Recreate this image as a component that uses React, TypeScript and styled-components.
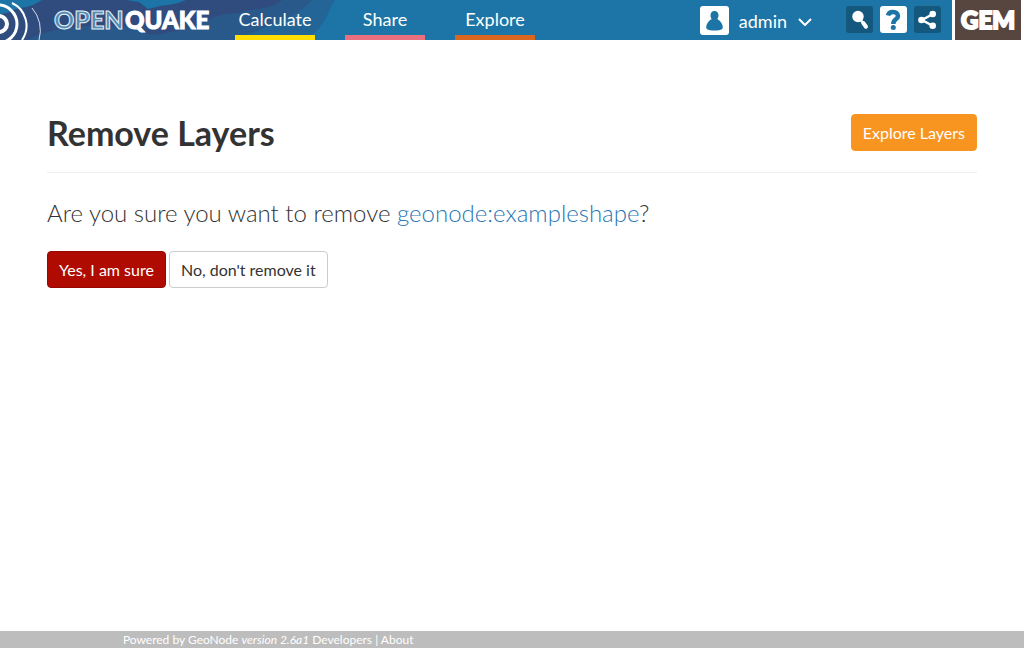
import React from 'react';
import styled, { createGlobalStyle } from 'styled-components';

const GlobalStyle = createGlobalStyle`
  *, *::before, *::after { box-sizing: border-box; }
  body {
    margin: 0;
    background: #fff;
    color: #333;
    font-family: Lato, sans-serif;
    font-size: 16px;
    line-height: 23px;
  }
  a { color: inherit; text-decoration: none; }
  button { font: inherit; cursor: pointer; }
`;

const Page = styled.div`
  min-height: 100vh;
  display: flex;
  flex-direction: column;
`;

const Header = styled.header`
  position: relative;
  display: flex;
  height: 40px;
  background: #1c75a6;
  color: #fff;
`;

const Waves = styled.svg`
  position: absolute;
  top: 0;
  left: 0;
`;

const Brand = styled.a`
  position: relative;
  width: 235px;
  flex: none;
`;

const Nav = styled.nav`
  position: relative;
  display: flex;
  gap: 30px;
`;

const NavLink = styled.a<{ $accent: string }>`
  width: 80px;
  height: 40px;
  border-bottom: 5px solid ${(p) => p.$accent};
  font-size: 18px;
  line-height: 39px;
  text-align: center;
`;

const Account = styled.button`
  display: flex;
  align-items: center;
  gap: 10px;
  margin-left: auto;
  padding: 0;
  border: 0;
  background: none;
  color: #fff;
  && { font-size: 18px; }
`;

const UserName = styled.span`
  padding-top: 3px;
`;

const Tools = styled.div`
  display: flex;
  gap: 7px;
  padding: 6px 11px 0 33px;
`;

const Tool = styled.button<{ $light?: boolean }>`
  display: block;
  width: 27px;
  height: 27px;
  padding: 0;
  border: 0;
  border-radius: 3px;
  background: ${(p) => (p.$light ? '#fff' : '#15587d')};
  color: ${(p) => (p.$light ? '#1c75a6' : '#fff')};
  svg { display: block; }
`;

const Gem = styled.a`
  width: 72px;
  border: solid #fff;
  border-width: 0 3px;
  background: #56463f;
  svg { display: block; }
`;

const Main = styled.main`
  flex: 1;
  padding: 74px 47px 0;
`;

const PageHeader = styled.div`
  display: flex;
  justify-content: space-between;
  align-items: flex-start;
  height: 59px;
  border-bottom: 1px solid #eee;
`;

const Title = styled.h2`
  margin: 0;
  font-size: 34px;
  font-weight: 700;
  line-height: 38px;
`;

const Question = styled.p`
  margin: 24px 0 22px;
  font-size: 24px;
  font-weight: 300;
  line-height: 32px;
`;

const LayerLink = styled.a`
  color: #2a76b4;
`;

const buttonColors = {
  warning: ['#f89521', '#f89521', '#fff'],
  danger: ['#b00b00', '#970900', '#fff'],
  plain: ['#fff', '#ccc', '#333'],
};

const Button = styled.button<{ $kind: keyof typeof buttonColors }>`
  display: inline-block;
  height: 37px;
  padding: 0 11px;
  border: 1px solid ${(p) => buttonColors[p.$kind][1]};
  border-radius: 4px;
  background: ${(p) => buttonColors[p.$kind][0]};
  color: ${(p) => buttonColors[p.$kind][2]};
  line-height: 35px;
  white-space: nowrap;
`;

const Actions = styled.form`
  display: flex;
  gap: 3px;
`;

const Footer = styled.footer`
  padding-left: 12%;
  background: #bdbdbd;
  color: #fff;
  font-size: 12px;
  line-height: 17px;
`;

const navItems = [
  { label: 'Calculate', accent: '#ffde00' },
  { label: 'Share', accent: '#ea6f7f' },
  { label: 'Explore', accent: '#db6620' },
];

export default function App() {
  return (
    <Page>
      <GlobalStyle />
      <Header>
        <Waves width="340" height="40" viewBox="0 0 340 40" aria-hidden="true">
          <path d="M0 0H335C329 9 327 19 320 27C315 34 307 37 302 40H0Z" fill="#246598" />
          <path d="M0 0H312C304 9 296 14 285 19C272 25 263 29 245 35L238 40H0Z" fill="#29588b" />
          <path d="M0 0H282C273 9 257 8 246 11C233 15 221 12 208 20C192 29 177 31 161 34C151 36 142 33 132 27C105 25 77 25 56 30C46 32 36 35 28 40H0Z" fill="#304c7f" />
          <path d="M0 0H42C32 6 28 7 20 8C12 10 7 14 0 14Z" fill="#1c75a6" />
          <path d="M126 0H186C177 4 168 5 160 6L148 9L139 2Z" fill="#1c75a6" />
        </Waves>
        <Brand href="#" aria-label="OpenQuake home">
          <svg width="235" height="40" viewBox="0 0 235 40">
            <g fill="none" stroke="#fff">
              <circle cx="-1" cy="24" r="8" strokeWidth="4" />
              <circle cx="-2" cy="24" r="19" strokeWidth="3" />
              <path d="M12 3A25 25 0 0 1 22 40" strokeWidth="2" />
              <path d="M32 8A34 34 0 0 1 39 40" strokeWidth="1" opacity=".8" />
            </g>
            <g fontFamily="Lato, sans-serif" fontWeight="900">
              <text x="54" y="29" fontSize="25" fill="#548bb2" stroke="#e4f1f7" strokeWidth="1">OPEN</text>
              <text x="125" y="29" fontSize="24" fill="#fff" stroke="#fff" strokeWidth="1">QUAKE</text>
            </g>
          </svg>
        </Brand>
        <Nav>
          {navItems.map((item) => (
            <NavLink key={item.label} href="#" $accent={item.accent}>{item.label}</NavLink>
          ))}
        </Nav>
        <Account type="button">
          <svg width="29" height="29" viewBox="0 0 29 29" aria-hidden="true">
            <rect width="29" height="29" rx="3" fill="#fff" />
            <path d="M14.500 5C17 5 18.500 7 18.500 9.200C18.500 10.800 18 12 17.300 13C21 15 22.500 18 22.800 21C23 23 21.500 23.700 19 24.200C16 24.700 13 24.700 10 24.200C7.500 23.700 6 23 6.200 21C6.500 18 8 15 11.700 13C11 12 10.500 10.800 10.500 9.200C10.500 7 12 5 14.500 5Z" fill="#1c75a6" />
          </svg>
          <UserName>admin</UserName>
          <svg width="16" height="12" viewBox="0 0 16 12" fill="none" stroke="#fff" strokeWidth="2" aria-hidden="true">
            <path d="M2 5L8 11L14 5" />
          </svg>
        </Account>
        <Tools>
          <Tool type="button" aria-label="Search">
            <svg width="27" height="27" viewBox="0 0 27 27">
              <circle cx="12" cy="10.500" r="5.700" fill="#fff" />
              <path d="M14 13L17 17" stroke="#fff" strokeWidth="2.500" />
              <path d="M17.300 17L20 20.700" stroke="#fff" strokeWidth="4" strokeLinecap="round" />
            </svg>
          </Tool>
          <Tool type="button" aria-label="Help" $light>
            <svg width="27" height="27" viewBox="0 0 27 27" fill="none" stroke="currentColor" strokeWidth="4.500">
              <path d="M8 9.500C9 4.800 18 4.800 18 10C18 13.500 13.300 12.500 13.300 18" />
              <circle cx="13.300" cy="21.500" r="2.500" fill="currentColor" stroke="none" />
            </svg>
          </Tool>
          <Tool type="button" aria-label="Share">
            <svg width="27" height="27" viewBox="0 0 27 27" fill="#fff">
              <path d="M19 8L8 14L19 20" fill="none" stroke="#fff" strokeWidth="2.500" />
              <circle cx="18.700" cy="8" r="3.300" />
              <circle cx="7.500" cy="14" r="3.300" />
              <circle cx="18.700" cy="19.700" r="3.300" />
            </svg>
          </Tool>
        </Tools>
        <Gem href="#" aria-label="GEM">
          <svg width="66" height="40" viewBox="0 0 66 40">
            <text x="6" y="29" fontFamily="Lato, sans-serif" fontWeight="900" fontSize="24" fill="#fff" stroke="#fff" strokeWidth="2">GEM</text>
          </svg>
        </Gem>
      </Header>
      <Main>
        <PageHeader>
          <Title>Remove Layers</Title>
          <Button as="a" href="#" $kind="warning">Explore Layers</Button>
        </PageHeader>
        <Question>
          Are you sure you want to remove <LayerLink href="#">geonode:exampleshape</LayerLink>?
        </Question>
        <Actions onSubmit={(e) => e.preventDefault()}>
          <Button type="submit" $kind="danger">Yes, I am sure</Button>
          <Button type="button" $kind="plain">No, don't remove it</Button>
        </Actions>
      </Main>
      <Footer>
        Powered by <a href="#">GeoNode</a> <i>version 2.6a1</i> <a href="#">Developers</a> | <a href="#">About</a>
      </Footer>
    </Page>
  );
}
